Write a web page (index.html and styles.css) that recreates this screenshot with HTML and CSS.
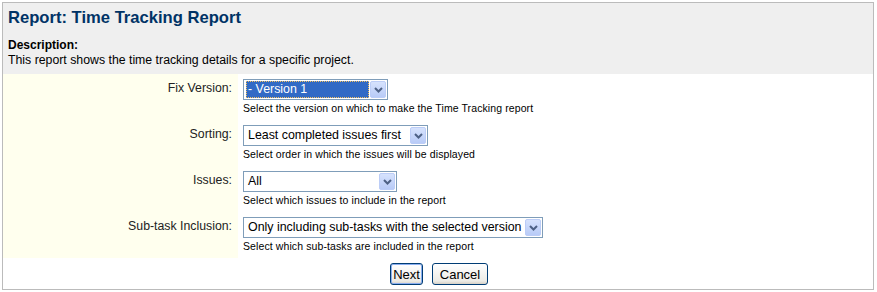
FILE: index.html
```html
<!DOCTYPE html>
<html>

<head>
    <meta charset="UTF-8">
    <title>Report: Time Tracking Report</title>
    <link rel="stylesheet" href="styles.css">
</head>

<body>
    <div class="report">
        <div class="report-head">
            <h1>Report: Time Tracking Report</h1>
            <div class="desc">
                <strong>Description:</strong><br>
                This report shows the time tracking details for a specific project.
            </div>
        </div>

        <table class="report-form">
            <tr>
                <td class="label">Fix Version:</td>
                <td class="field">
                    <div class="combo combo-version">
                        <span class="combo-text selected">- Version 1</span>
                        <span class="combo-btn">
                            <svg width="9" height="6" viewBox="0 0 9 6"><path d="M1 1 L4.5 4.5 L8 1" fill="none" stroke="#4d6185" stroke-width="2"/></svg>
                        </span>
                    </div>
                    <div class="hint">Select the version on which to make the Time Tracking report</div>
                </td>
            </tr>
            <tr>
                <td class="label">Sorting:</td>
                <td class="field">
                    <div class="combo combo-sorting">
                        <span class="combo-text">Least completed issues first</span>
                        <span class="combo-btn">
                            <svg width="9" height="6" viewBox="0 0 9 6"><path d="M1 1 L4.5 4.5 L8 1" fill="none" stroke="#4d6185" stroke-width="2"/></svg>
                        </span>
                    </div>
                    <div class="hint">Select order in which the issues will be displayed</div>
                </td>
            </tr>
            <tr>
                <td class="label">Issues:</td>
                <td class="field">
                    <div class="combo combo-issues">
                        <span class="combo-text">All</span>
                        <span class="combo-btn">
                            <svg width="9" height="6" viewBox="0 0 9 6"><path d="M1 1 L4.5 4.5 L8 1" fill="none" stroke="#4d6185" stroke-width="2"/></svg>
                        </span>
                    </div>
                    <div class="hint">Select which issues to include in the report</div>
                </td>
            </tr>
            <tr>
                <td class="label">Sub-task Inclusion:</td>
                <td class="field">
                    <div class="combo combo-subtask">
                        <span class="combo-text">Only including sub-tasks with the selected version</span>
                        <span class="combo-btn">
                            <svg width="9" height="6" viewBox="0 0 9 6"><path d="M1 1 L4.5 4.5 L8 1" fill="none" stroke="#4d6185" stroke-width="2"/></svg>
                        </span>
                    </div>
                    <div class="hint">Select which sub-tasks are included in the report</div>
                </td>
            </tr>
        </table>

        <div class="actions">
            <button class="btn btn-next">Next</button>
            <button class="btn btn-cancel">Cancel</button>
        </div>
    </div>
</body>

</html>
```

FILE: styles.css
```css
* {
    box-sizing: border-box;
}

body {
    font-family: 'Liberation Sans', Arial, sans-serif;
    font-size: 13px;
    color: #222222;
    background-color: #ffffff;
    margin: 0;
    padding: 0;
}

.report {
    margin: 2px 3px 0 2px;
    height: 288px;
    border: 1px solid #bbbbbb;
}

.report-head {
    background-color: #efefef;
    height: 71px;
    padding: 5px 5px 0 5px;
}

.report-head h1 {
    margin: 0;
    font-size: 16.6px;
    line-height: 20px;
    color: #003366;
}

.desc {
    margin-top: 10px;
    font-size: 12.3px;
    line-height: 15px;
    color: #000000;
}

.desc strong {
    font-size: 12px;
}

.report-form {
    width: 100%;
    border-collapse: collapse;
    border-spacing: 0;
}

.report-form td {
    padding: 0;
    vertical-align: top;
}

.report-form .label {
    width: 235px;
    height: 46px;
    background-color: #ffffee;
    text-align: right;
    padding: 6px 6px 0 0;
    font-size: 12.3px;
    line-height: 16px;
    color: #222222;
}

.report-form .field {
    padding: 5px 0 0 5px;
}

.combo {
    position: relative;
    height: 21px;
    border: 1px solid #7f9db9;
    background-color: #ffffff;
    padding: 1px 18px 0 2px;
    font-size: 12.4px;
    line-height: 17px;
    color: #000000;
    white-space: nowrap;
}

.combo-version {
    width: 145px;
}

.combo-sorting {
    width: 185px;
}

.combo-issues {
    width: 154px;
}

.combo-subtask {
    width: 300px;
}

.combo-text {
    display: block;
    padding: 0 2px;
    overflow: hidden;
}

.combo-text.selected {
    background-color: #316ac5;
    color: #ffffff;
    outline: 1px dotted #f0c060;
    outline-offset: -1px;
}

.combo-btn {
    position: absolute;
    right: 1px;
    top: 1px;
    width: 16px;
    height: 17px;
    border: 1px solid #bccdf7;
    border-radius: 2px;
    background: linear-gradient(#d6e2fd, #b8cbf7);
    display: flex;
    align-items: center;
    justify-content: center;
}

.hint {
    margin-top: 2px;
    font-size: 10.5px;
    letter-spacing: 0.1px;
    line-height: 12px;
    color: #000000;
}

.actions {
    display: flex;
    justify-content: center;
    gap: 9px;
    padding: 5px 0 0 2px;
}

.btn {
    height: 22px;
    padding: 0;
    margin: 0;
    font-family: 'Liberation Sans', Arial, sans-serif;
    font-size: 13px;
    color: #000000;
    border: 1px solid #003c74;
    border-radius: 3px;
    background: linear-gradient(#ffffff, #ecebe6 85%, #d6d0c5);
}

.btn-next {
    width: 33px;
    box-shadow: inset 0 0 0 1px #8aaef0;
}

.btn-cancel {
    width: 56px;
}
```
